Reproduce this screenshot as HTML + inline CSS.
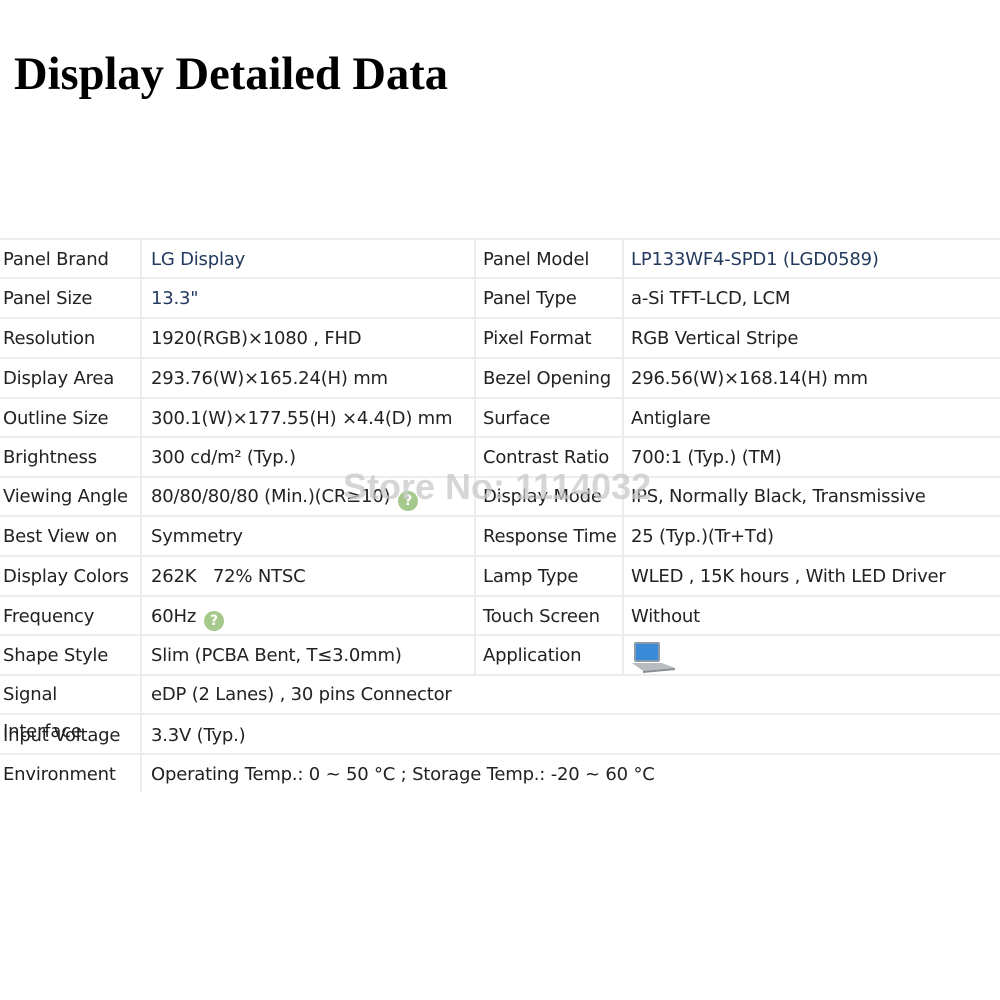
<!DOCTYPE html>
<html><head><meta charset="utf-8"><style>
*{margin:0;padding:0;box-sizing:border-box}
body{width:1000px;height:1000px;background:#fff;position:relative;overflow:hidden;font-family:"DejaVu Sans","Liberation Sans",sans-serif;font-size:18px;color:#222}
h1{position:absolute;left:14px;top:50px;font-family:"Liberation Serif",serif;font-weight:bold;font-size:46.5px;line-height:50px;color:#000;white-space:nowrap}
.hl{position:absolute;left:0;width:1000px;height:2px;background:#ececec}
.vl{position:absolute;width:2px;background:#ececec}
.t{position:absolute;white-space:nowrap;line-height:22px;letter-spacing:-0.2px}
.b{color:#233a5e}
.q{display:inline-block;width:20px;height:20px;border-radius:50%;background:#a5c98a;color:#fff;font-size:14px;font-weight:bold;text-align:center;line-height:20px;vertical-align:-3px;margin-left:8px;letter-spacing:0}
.wm{position:absolute;left:343px;top:466px;font-family:"Liberation Sans",sans-serif;font-weight:bold;font-size:36px;color:rgba(200,200,200,0.75);white-space:nowrap}
</style></head><body>
<h1>Display Detailed Data</h1>
<div class="hl" style="top:238px"></div>
<div class="hl" style="top:277px"></div>
<div class="hl" style="top:317px"></div>
<div class="hl" style="top:357px"></div>
<div class="hl" style="top:397px"></div>
<div class="hl" style="top:436px"></div>
<div class="hl" style="top:476px"></div>
<div class="hl" style="top:515px"></div>
<div class="hl" style="top:555px"></div>
<div class="hl" style="top:595px"></div>
<div class="hl" style="top:634px"></div>
<div class="hl" style="top:674px"></div>
<div class="hl" style="top:713px"></div>
<div class="hl" style="top:753px"></div>
<div class="vl" style="left:140px;top:240px;height:552px"></div>
<div class="vl" style="left:474px;top:240px;height:434px"></div>
<div class="vl" style="left:622px;top:240px;height:434px"></div>

<div class="t" style="left:3px;top:249px">Panel Brand</div><div class="t b" style="left:151px;top:249px">LG Display</div><div class="t" style="left:483px;top:249px">Panel Model</div><div class="t b" style="left:631px;top:249px">LP133WF4-SPD1 (LGD0589)</div>
<div class="t" style="left:3px;top:288px">Panel Size</div><div class="t b" style="left:151px;top:288px">13.3"</div><div class="t" style="left:483px;top:288px">Panel Type</div><div class="t" style="left:631px;top:288px">a-Si TFT-LCD, LCM</div>
<div class="t" style="left:3px;top:328px">Resolution</div><div class="t" style="left:151px;top:328px">1920(RGB)×1080 , FHD</div><div class="t" style="left:483px;top:328px">Pixel Format</div><div class="t" style="left:631px;top:328px">RGB Vertical Stripe</div>
<div class="t" style="left:3px;top:368px">Display Area</div><div class="t" style="left:151px;top:368px">293.76(W)×165.24(H) mm</div><div class="t" style="left:483px;top:368px">Bezel Opening</div><div class="t" style="left:631px;top:368px">296.56(W)×168.14(H) mm</div>
<div class="t" style="left:3px;top:408px">Outline Size</div><div class="t" style="left:151px;top:408px">300.1(W)×177.55(H) ×4.4(D) mm</div><div class="t" style="left:483px;top:408px">Surface</div><div class="t" style="left:631px;top:408px">Antiglare</div>
<div class="t" style="left:3px;top:447px">Brightness</div><div class="t" style="left:151px;top:447px">300 cd/m² (Typ.)</div><div class="t" style="left:483px;top:447px">Contrast Ratio</div><div class="t" style="left:631px;top:447px">700:1 (Typ.) (TM)</div>
<div class="t" style="left:3px;top:486px">Viewing Angle</div><div class="t" style="left:151px;top:486px">80/80/80/80 (Min.)(CR≥10)<span class="q">?</span></div><div class="t" style="left:483px;top:486px">Display Mode</div><div class="t" style="left:631px;top:486px">IPS, Normally Black, Transmissive</div>
<div class="t" style="left:3px;top:526px">Best View on</div><div class="t" style="left:151px;top:526px">Symmetry</div><div class="t" style="left:483px;top:526px">Response Time</div><div class="t" style="left:631px;top:526px">25 (Typ.)(Tr+Td)</div>
<div class="t" style="left:3px;top:566px">Display Colors</div><div class="t" style="left:151px;top:566px">262K&nbsp;&nbsp;&nbsp;72% NTSC</div><div class="t" style="left:483px;top:566px">Lamp Type</div><div class="t" style="left:631px;top:566px">WLED , 15K hours , With LED Driver</div>
<div class="t" style="left:3px;top:606px">Frequency</div><div class="t" style="left:151px;top:606px">60Hz<span class="q">?</span></div><div class="t" style="left:483px;top:606px">Touch Screen</div><div class="t" style="left:631px;top:606px">Without</div>
<div class="t" style="left:3px;top:645px">Shape Style</div><div class="t" style="left:151px;top:645px">Slim (PCBA Bent, T≤3.0mm)</div><div class="t" style="left:483px;top:645px">Application</div>
<svg style="position:absolute;left:631px;top:640px" width="48" height="34" viewBox="0 0 48 34"><rect x="3" y="2" width="26" height="20" rx="2" fill="#8a9aa8"/><rect x="5" y="4" width="22" height="16" fill="#3a8ad8"/><path d="M1 23 L31 23 L44 28 L12 31 Z" fill="#b8bcc0"/><path d="M12 31 L44 28 L44 30 L12 33 Z" fill="#8a8e92"/></svg>
<div class="t" style="left:3px;top:684px">Signal</div><div class="t" style="left:151px;top:684px">eDP (2 Lanes) , 30 pins Connector</div>
<div class="t" style="left:3px;top:721px">Interface</div>
<div class="t" style="left:3px;top:725px">Input Voltage</div><div class="t" style="left:151px;top:725px">3.3V (Typ.)</div>
<div class="t" style="left:3px;top:764px">Environment</div><div class="t" style="left:151px;top:764px">Operating Temp.: 0 ~ 50 °C ; Storage Temp.: -20 ~ 60 °C</div>
<div class="wm">Store No: 1114032</div>
</body></html>
